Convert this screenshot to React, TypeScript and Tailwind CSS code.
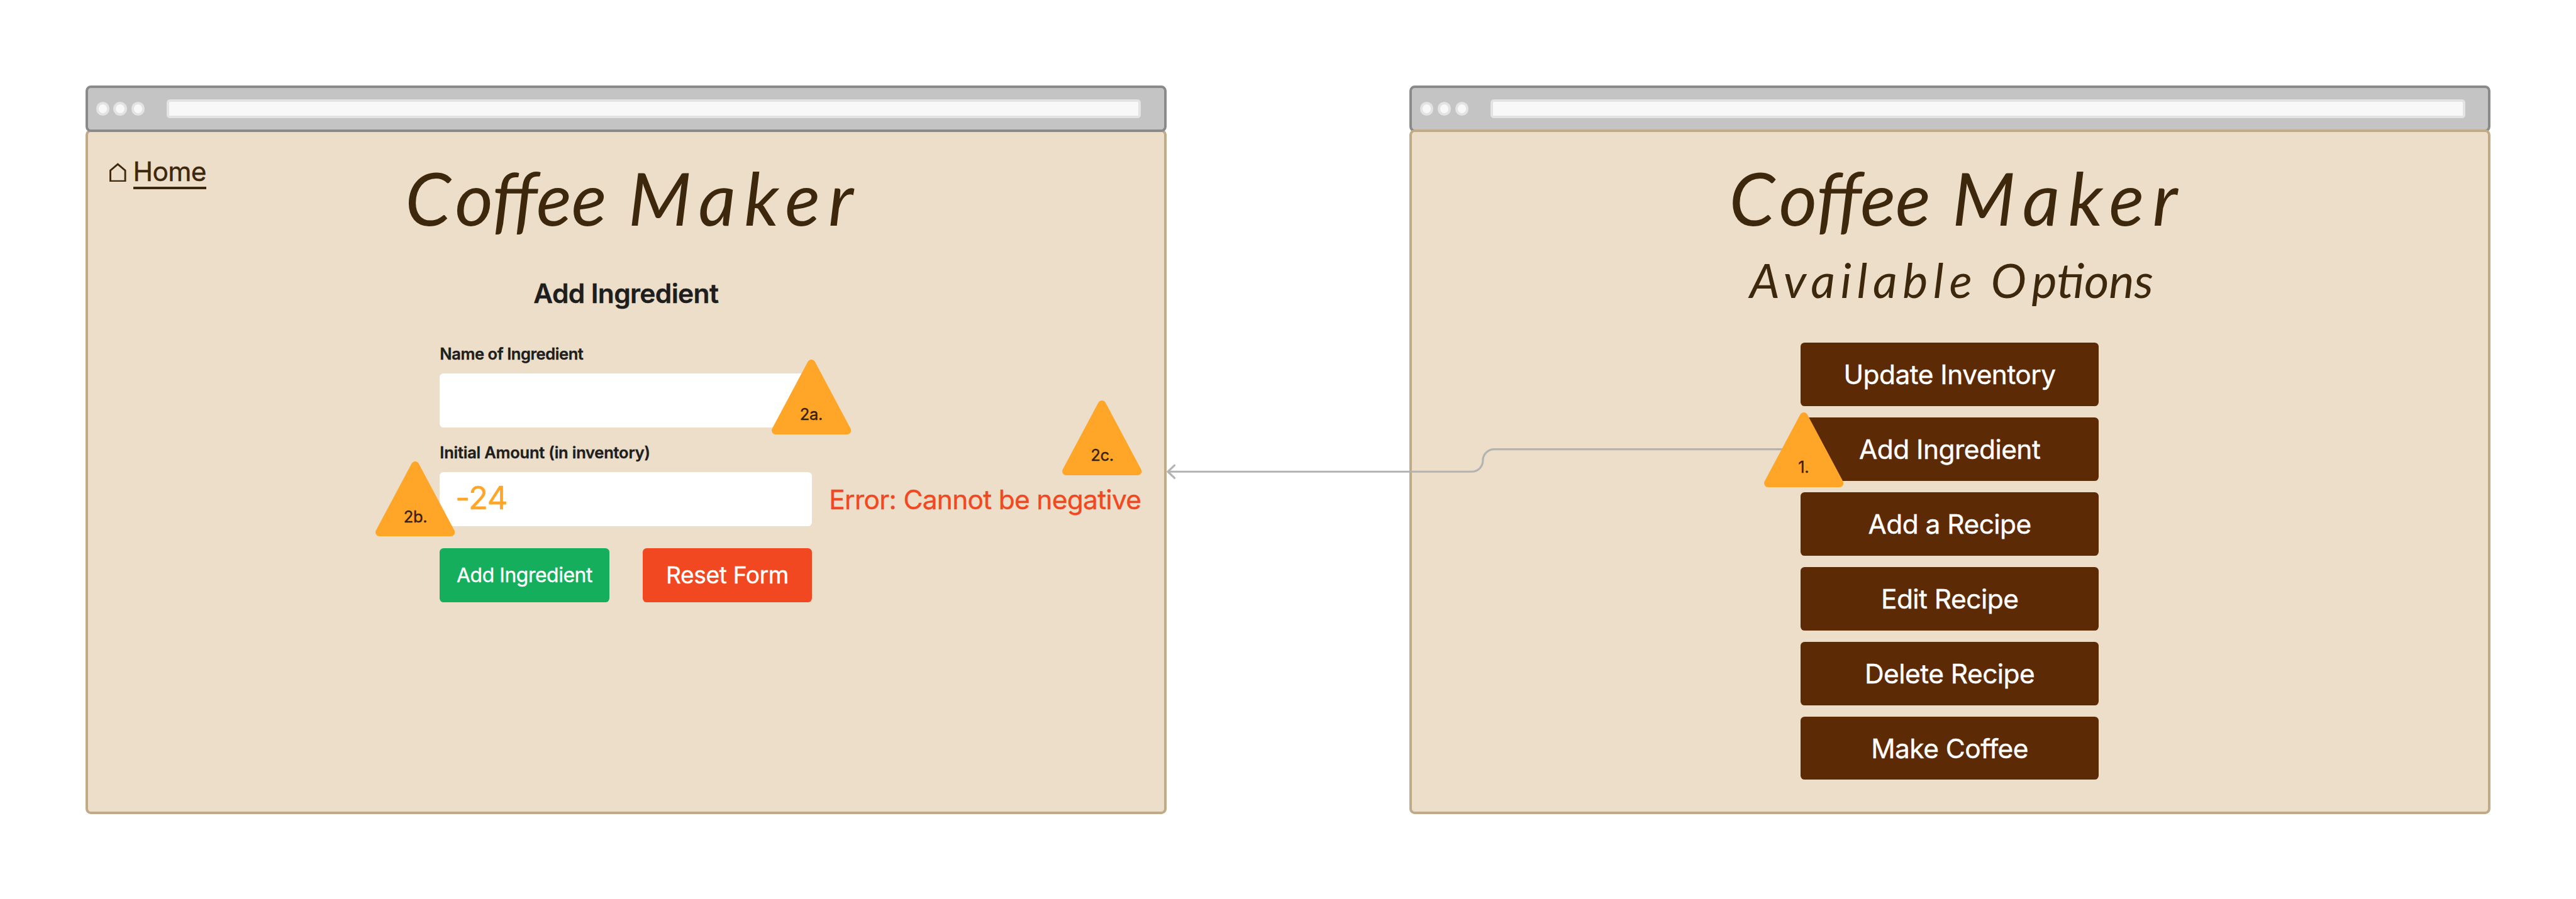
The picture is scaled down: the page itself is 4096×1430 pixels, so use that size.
import type { ReactNode } from "react";

const OPTIONS = [
  "Update Inventory",
  "Add Ingredient",
  "Add a Recipe",
  "Edit Recipe",
  "Delete Recipe",
  "Make Coffee",
];

function Chrome({ front }: { front: boolean }) {
  return (
    <div
      className={`relative flex h-[74.3px] shrink-0 items-center rounded-[8.5px] border-4 border-[#8a8a8a] bg-[#c4c4c4] pl-[13px] ${
        front ? "z-10" : "z-0"
      }`}
    >
      <div className="size-[21.2px] rounded-full border-4 border-[#e3e3e3] bg-[#f8f8f8]" />
      <div className="ml-[6.4px] size-[21.2px] rounded-full border-4 border-[#e3e3e3] bg-[#f8f8f8]" />
      <div className="ml-[7.4px] size-[21.2px] rounded-full border-4 border-[#e3e3e3] bg-[#f8f8f8]" />
      <div className="ml-[35px] h-[29.7px] w-[1549.3px] rounded-[5.3px] border-4 border-[#e3e3e3] bg-[#f8f8f8]" />
    </div>
  );
}

function BrowserWindow({ chromeInFront, children }: { chromeInFront: boolean; children: ReactNode }) {
  return (
    <section className="flex h-[1158.8px] w-[1719px] shrink-0 flex-col">
      <Chrome front={chromeInFront} />
      <div className="relative z-[5] -mt-[4.2px] flex grow flex-col rounded-[8.5px] border-4 border-[#c1aa88] bg-[#ecdec9]">
        {children}
      </div>
    </section>
  );
}

function Title() {
  return (
    <h1 className="mt-[45.8px] whitespace-nowrap font-['Lato',cursive] text-[116.7px] leading-none font-normal italic text-[#3d280d] [word-spacing:7px] [-webkit-text-stroke:0px]">
      <span className="tracking-[6.5px]">C</span>offee <span className="tracking-[13px]">Maker</span>
    </h1>
  );
}

function HomeLink() {
  return (
    <a className="mt-[42.4px] ml-[34.2px] flex items-start text-[#3d280d]">
      <svg className="mt-[6.4px] h-[30.6px] w-[26.6px]" viewBox="0 0 50 57.6" fill="none">
        <path d="M2.8 54.8V22.8L25 4.2L47.2 22.8V54.8Z" stroke="currentColor" strokeWidth="5.4" />
      </svg>
      <span className="ml-[11px] flex flex-col">
        <span className="h-[45.1px] text-[42.445px] leading-none tracking-[-0.015em]">Home</span>
        <span className="h-[3.4px] bg-[#3d280d]" />
      </span>
    </a>
  );
}

function Marker({ label, className }: { label: string; className: string }) {
  return (
    <div className={`absolute z-30 h-[119px] w-[126.3px] ${className}`}>
      <svg className="absolute inset-0 size-full" viewBox="0 0 238 224.3">
        <path
          d="M119 12L226 212.3H12Z"
          fill="#ffa629"
          stroke="#ffa629"
          strokeWidth="24"
          strokeLinejoin="round"
        />
      </svg>
      <div className="relative pt-[74.7px] text-center text-[25.467px] leading-none tracking-[-0.01em] text-[#332108]">
        {label}
      </div>
    </div>
  );
}

function Connector() {
  return (
    <svg
      className="absolute top-[700px] left-[1850px] z-20 h-[70px] w-[1000px]"
      viewBox="3486.8 1319.3 1884.8 131.9"
      fill="none"
      stroke="#b3b3b3"
      strokeWidth="6"
      strokeLinecap="round"
      strokeLinejoin="round"
    >
      <path d="M3500 1414H4410.5A33.5 33.5 0 0 0 4444 1380.5A33.5 33.5 0 0 1 4477.5 1347H5360" />
      <path d="M3520 1395L3500 1414L3520 1433" />
    </svg>
  );
}

export default function App() {
  return (
    <main className="relative flex h-[1430px] w-[4096px] gap-[386.3px] overflow-hidden bg-white p-[135.8px] font-['Inter',sans-serif] font-normal [-webkit-text-stroke:0.4px]">
      <BrowserWindow chromeInFront>
        <header className="grid h-[236.2px] shrink-0 grid-cols-[504.4px_auto] items-start">
          <HomeLink />
          <Title />
        </header>
        <h2 className="text-center text-[42.445px] leading-none font-semibold tracking-[-0.015em] text-[#1e1e1e]">
          Add Ingredient
        </h2>
        <form className="mt-[61.7px] ml-[559.5px] flex flex-col">
          <label className="text-[25.467px] leading-none font-semibold tracking-[-0.016em] text-[#1e1e1e]">
            Name of Ingredient
          </label>
          <div className="mt-[18.5px] h-[86.2px] w-[592.1px] rounded-[6.4px] bg-white" />
          <label className="mt-[26.6px] text-[25.467px] leading-none font-semibold tracking-[-0.008em] text-[#1e1e1e]">
            Initial Amount (in inventory)
          </label>
          <div className="mt-[18.3px] flex items-center">
            <div className="flex h-[86.2px] w-[592.1px] shrink-0 items-center rounded-[6.4px] bg-white pb-[2.4px] pl-[24.6px] text-[50.934px] leading-none tracking-[-0.01em] text-[#ffa629]">
              -24
            </div>
            <div className="ml-[26.9px] pt-[1.8px] text-[42.445px] leading-none tracking-[-0.0165em] whitespace-nowrap text-[#f24822]">
              Error: Cannot be negative
            </div>
          </div>
          <div className="mt-[34.7px] flex gap-[53px]">
            <button className="h-[86.5px] w-[269.5px] rounded-[6.4px] bg-[#14ae5c] text-[31.834px] leading-none tracking-[-0.013em] text-white">
              Add Ingredient
            </button>
            <button className="h-[86.5px] w-[269.5px] rounded-[6.4px] bg-[#f24822] text-[37.14px] leading-none tracking-[-0.01em] text-white">
              Reset Form
            </button>
          </div>
        </form>
      </BrowserWindow>

      <BrowserWindow chromeInFront={false}>
        <header className="h-[196.6px] shrink-0 pl-[504.4px]">
          <div className="flex">
            <Title />
          </div>
        </header>
        <h2 className="ml-[537px] h-[138.9px] font-['Lato',cursive] text-[75.9px] leading-none font-normal whitespace-nowrap italic text-[#3d280d] [word-spacing:-5px] [-webkit-text-stroke:0px]">
          <span className="tracking-[8.5px]">Available O</span>ptions
        </h2>
        <nav className="ml-[617.9px] flex w-[474.3px] flex-col gap-[18.05px]">
          {OPTIONS.map((option) => (
            <button
              key={option}
              className="h-[100.8px] rounded-[6.4px] bg-[#5c2b05] pt-[1.8px] text-[42.445px] leading-none tracking-[-0.0125em] text-white"
            >
              {option}
            </button>
          ))}
        </nav>
      </BrowserWindow>

      <Connector />
      <Marker label="2a." className="top-[571.8px] left-[1226.7px]" />
      <Marker label="2b." className="top-[734.2px] left-[597.4px]" />
      <Marker label="2c." className="top-[636.7px] left-[1689.3px]" />
      <Marker label="1." className="top-[655.7px] left-[2804.6px]" />
    </main>
  );
}
